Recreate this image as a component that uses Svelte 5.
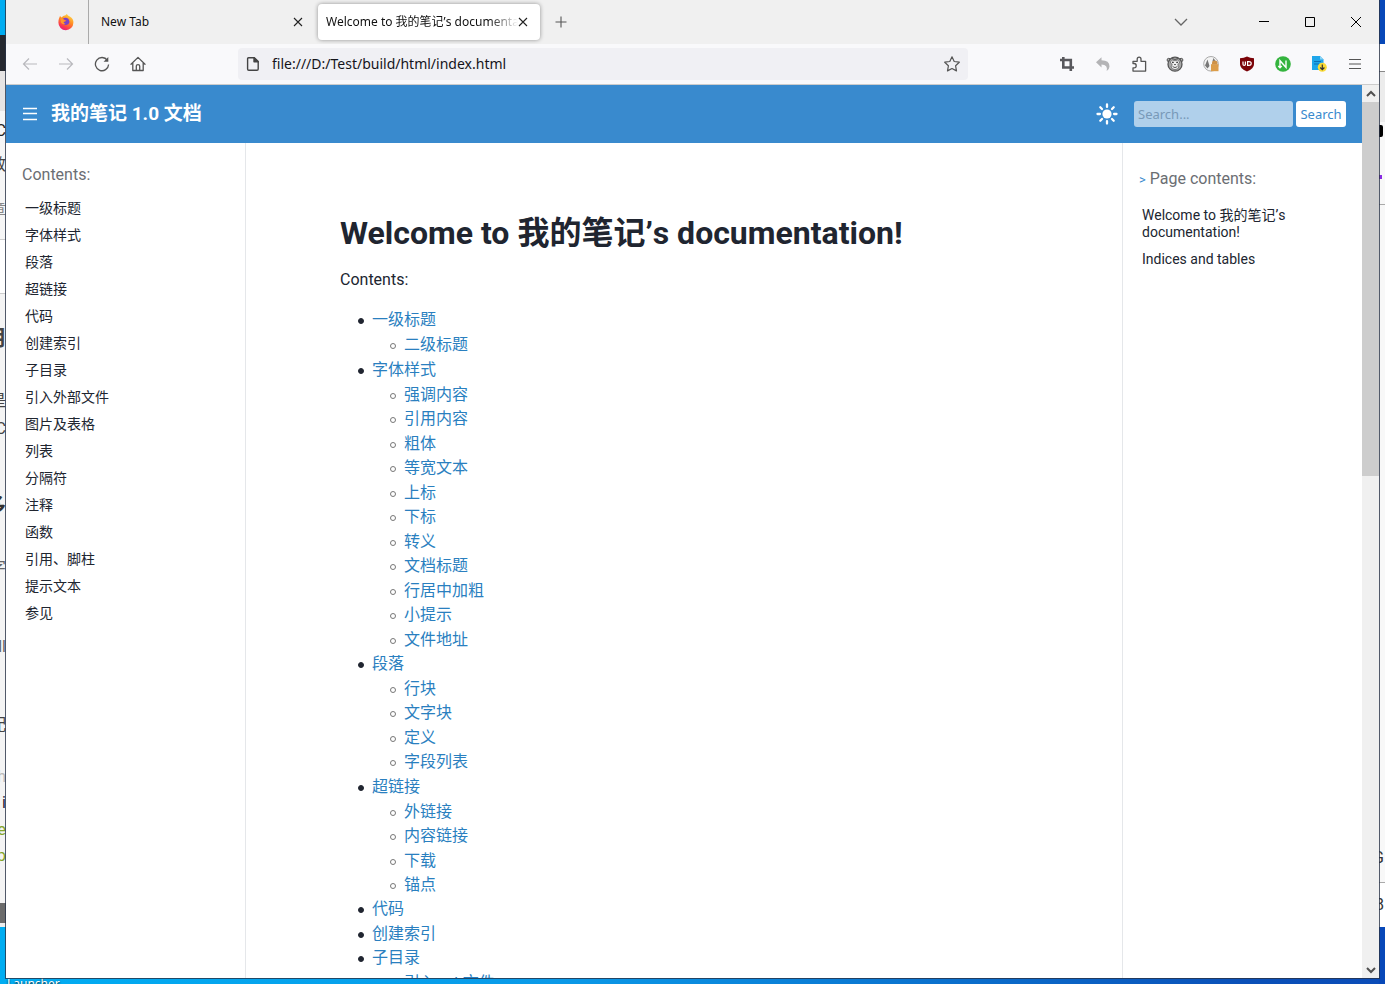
<script>
  const navItems = [
    '一级标题', '字体样式', '段落', '超链接', '代码', '创建索引', '子目录', '引入外部文件',
    '图片及表格', '列表', '分隔符', '注释', '函数', '引用、脚柱', '提示文本', '参见'
  ];

  const contents = [
    { title: '一级标题', children: ['二级标题'] },
    {
      title: '字体样式',
      children: [
        '强调内容', '引用内容', '粗体', '等宽文本', '上标', '下标',
        '转义', '文档标题', '行居中加粗', '小提示', '文件地址'
      ]
    },
    { title: '段落', children: ['行块', '文字块', '定义', '字段列表'] },
    { title: '超链接', children: ['外链接', '内容链接', '下载', '锚点'] },
    { title: '代码', children: [] },
    { title: '创建索引', children: [] },
    { title: '子目录', children: ['引入 rst 文件'] }
  ];

  // slivers of the windows lying behind the browser
  const leftBits = [
    { top: 121, text: 'C', color: '#222' },
    { top: 155, text: '效', color: '#444' },
    { top: 200, text: '章', color: '#888' },
    { top: 328, text: '用', color: '#444', bold: true },
    { top: 391, text: '是', color: '#444' },
    { top: 419, text: 'C', color: '#444' },
    { top: 496, text: '多', color: '#333', bold: true },
    { top: 558, text: '字', color: '#666' },
    { top: 637, text: 'll', color: '#666' },
    { top: 715, text: '配', color: '#444' },
    { top: 767, text: 'h', color: '#bbb' },
    { top: 793, text: 'i', color: '#223' },
    { top: 820, text: 'e', color: '#85a52b' },
    { top: 846, text: 'p', color: '#85a52b' }
  ];
  const rightBits = [
    { top: 848, text: 'G', color: '#333' },
    { top: 895, text: '8', color: '#333' }
  ];

  let url = 'file:///D:/Test/build/html/index.html';
  let query = '';
</script>

<div class="desktop">
  <div class="behind left">
    <div class="dark-bar"></div>
    <div class="grey-bar"></div>
    <div class="pale"></div>
    <div class="foot-bar"></div>
    {#each leftBits as b}
      <span class="bit" class:bold={b.bold} style="top: {b.top}px; color: {b.color}">{b.text}</span>
    {/each}
  </div>
  <div class="behind right">
    <div class="white-bar"></div>
    <div class="pale"></div>
    <i class="blob"></i>
    <i class="dot"></i>
    {#each rightBits as b}
      <span class="bit" style="top: {b.top}px; color: {b.color}">{b.text}</span>
    {/each}
  </div>
  <span class="shortcut">Launcher</span>

  <div class="window">
    <div class="tabs">
      <div class="pinned">
        <svg width="18" height="18" viewBox="0 0 18 18">
          <defs>
            <linearGradient id="fox" x1="0.8" y1="0" x2="0.3" y2="1">
              <stop offset="0" stop-color="#ffe14a" />
              <stop offset="0.45" stop-color="#ff8a24" />
              <stop offset="0.8" stop-color="#fb3a4e" />
              <stop offset="1" stop-color="#e01b84" />
            </linearGradient>
          </defs>
          <path d="M2 5.500 3 3l1.500 1.600Q6 2.600 8.500 2.200L9.800 1q1 1.700 3 2.600 4 2.400 3.600 6.200a7.500 7.500 0 0 1-15-.2Q1.400 7.200 2 5.500Z" fill="url(#fox)" />
          <path d="M6 5.500q3-1.500 5.500.5 1.800 2.600 0 5-3 2-5 0-1.500-2 .8-2.600 1.600.2 2.200-.6Q7.600 7.400 6 5.500Z" fill="#7b40c8" />
          <path d="M3.500 5.200q2 .2 3 2l2 .6q-1 1-2 1.300.3 1.600 2 1.600-3 1.500-4.600-1.200Z" fill="#ff9a2a" />
        </svg>
      </div>
      <div class="tab">
        <span class="label">New Tab</span>
        <button aria-label="Close New Tab">
          <svg width="10" height="10" viewBox="0 0 10 10"><path d="M1 1l8 8M9 1L1 9" stroke="#222" stroke-width="1.1" /></svg>
        </button>
      </div>
      <div class="tab active">
        <span class="label">Welcome to 我的笔记’s documentation! — 我的笔记</span>
        <button aria-label="Close tab">
          <svg width="10" height="10" viewBox="0 0 10 10"><path d="M1 1l8 8M9 1L1 9" stroke="#222" stroke-width="1.1" /></svg>
        </button>
      </div>
      <button class="new" aria-label="New tab">
        <svg width="12" height="12" viewBox="0 0 12 12"><path d="M6 .5v11M.5 6h11" stroke="#555" stroke-width="1.1" /></svg>
      </button>
      <div class="controls">
        <button class="list" aria-label="List all tabs">
          <svg width="14" height="14" viewBox="0 0 14 14" fill="none"><path d="M1 4l6 6 6-6" stroke="#666" stroke-width="1.3" /></svg>
        </button>
        <button aria-label="Minimize">
          <svg width="10" height="10" viewBox="0 0 10 10"><path d="M0 4.500h10" stroke="#000" /></svg>
        </button>
        <button aria-label="Maximize">
          <svg width="10" height="10" viewBox="0 0 10 10" fill="none"><path d="M.5 .5h9v9h-9z" stroke="#000" /></svg>
        </button>
        <button aria-label="Close window">
          <svg width="10" height="10" viewBox="0 0 10 10"><path d="M0 0l10 10M10 0L0 10" stroke="#000" /></svg>
        </button>
      </div>
    </div>

    <div class="toolbar">
      <button aria-label="Back">
        <svg width="16" height="16" viewBox="0 0 16 16" fill="none" stroke="#b9b9bd" stroke-width="1.2"><path d="M15 8H1.500M7 2.500L1.500 8 7 13.500" /></svg>
      </button>
      <button aria-label="Forward">
        <svg width="16" height="16" viewBox="0 0 16 16" fill="none" stroke="#b9b9bd" stroke-width="1.2"><path d="M1 8h13.500M9 2.500L14.500 8 9 13.500" /></svg>
      </button>
      <button aria-label="Reload">
        <svg width="16" height="16" viewBox="0 0 16 16" fill="none" stroke="#555" stroke-width="1.3"><path d="M13.400 4.300A6.600 6.600 0 1 0 14.600 8.500" /><path d="M14.300 1v4.700H9.600z" fill="#555" stroke="none" /></svg>
      </button>
      <button aria-label="Home">
        <svg width="16" height="16" viewBox="0 0 16 16" fill="none" stroke="#555" stroke-width="1.3" stroke-linejoin="round" stroke-linecap="round"><path d="M1 8.200L8 1.400l7 6.800M2.800 6.800v7.700h10.400V6.800M6.300 14.300V10q0-1.300 1.700-1.300T9.700 10v4.300" /></svg>
      </button>
      <div class="urlbar">
        <svg width="16" height="16" viewBox="0 0 16 16" fill="none" stroke="#444" stroke-width="1.4" stroke-linejoin="round"><path d="M3.600 1.700h5.700l3.900 3.900v7.500q0 1.200-1.200 1.200H3.800q-1.200 0-1.200-1.200V2.800q0-1.100 1-1.100Z" /><path d="M9 1.700v4.100h4.200z" fill="#444" /></svg>
        <input aria-label="Address" bind:value={url} />
        <button aria-label="Bookmark this page">
          <svg width="18" height="18" viewBox="0 0 18 18" fill="none" stroke="#555" stroke-width="1.2" stroke-linejoin="round"><path d="M9 1.800l2.200 4.700 5.100.7-3.700 3.600.9 5.100L9 13.500l-4.500 2.400.9-5.100L1.700 7.200l5.100-.7z" /></svg>
        </button>
      </div>
      <div class="extensions">
        <button aria-label="Screenshot">
          <svg width="16" height="16" viewBox="0 0 16 16" fill="none" stroke="#58585c" stroke-width="2.600"><path d="M1 4h10.800v7.500M4.300 1v10.500H15M11.800 11v4" /></svg>
        </button>
        <button aria-label="Undo close tab">
          <svg width="16" height="16" viewBox="0 0 16 16"><path d="M1 6.200L6.500 1.200v3.100q8 0 8 6.200 0 2.500-2.800 4.500 1.500-6.200-5.200-6.500v3z" fill="#b4b4b6" /></svg>
        </button>
        <button aria-label="Extensions">
          <svg width="16" height="16" viewBox="0 0 16 16" fill="none" stroke="#555" stroke-width="1.3" stroke-linejoin="round"><path d="M2 7.500V5.300h4.200V3.200q0-2 1.900-2t1.900 2v2.100h4.600v9.800H2v-3.200h1.200q2 0 2-2.200T3.200 7.500Z" /></svg>
        </button>
        <button aria-label="Tampermonkey">
          <svg width="18" height="18" viewBox="0 0 18 18" fill="none" stroke="#555"><circle cx="2.800" cy="5" r="1.700" fill="#bbb" /><circle cx="15.200" cy="5" r="1.700" fill="#bbb" /><circle cx="9" cy="9.200" r="7" fill="#a8a8a8" stroke-width="1.300" /><path d="M4.300 6.800q2-3 4.700-1 2.700-2 4.700 1-.4 2-2 2.800 2.300 2.400 0 4.200-2.700 1.500-5.400 0-2.300-1.800 0-4.200-1.600-.8-2-2.800Z" fill="#f2f2f2" stroke-width=".7" /><circle cx="6.900" cy="7.300" r=".9" fill="#333" stroke="none" /><circle cx="11.100" cy="7.300" r=".9" fill="#333" stroke="none" /><path d="M6.600 11.600q2.400 2 4.800 0M8 9.600h2M6 3.500l3 1 3-1" /></svg>
        </button>
        <button aria-label="Cookie editor">
          <svg width="18" height="18" viewBox="0 0 18 18"><circle cx="9" cy="8.800" r="7.300" fill="#f4f4f4" stroke="#aaa" /><path d="M5.500 4.500l2 6.500-2 2.500L3 10.500zM11.500 3l2 3-2 1.500-1-1.500z" fill="#777" /><path d="M9 9.200h7.500v7H9z" fill="#dc9d4a" /><path d="M10 9.400V7.500q0-2 2.700-2t2.700 2v1.900z" fill="#cf9246" /></svg>
        </button>
        <button aria-label="uBlock Origin">
          <svg width="16" height="16" viewBox="0 0 16 16"><path d="M8 .5q3 1.800 7 1.800v6q0 4.500-7 7.300-7-2.800-7-7.300v-6q4 0 7-1.800Z" fill="#7b0308" /><path d="M4 5.500v2.700q0 1.200 1.200 1.200t1.200-1.200V5.500m2.200.1v3.800h1.200q2.400 0 2.400-1.900T9.800 5.600z" fill="none" stroke="#fff" stroke-width="1.200" /></svg>
        </button>
        <button aria-label="Notes clipper">
          <svg width="16" height="16" viewBox="0 0 16 16"><circle cx="8" cy="8" r="7.800" fill="#34b43e" /><path d="M5 11.500V4.700l6 6.800V4.500M3.300 10l1.700 1.800 1.700-1.800" fill="none" stroke="#fff" stroke-width="1.400" /></svg>
        </button>
        <button aria-label="Save page">
          <svg width="16" height="16" viewBox="0 0 16 16"><path d="M1 0h8l3.500 3.500V14H1z" fill="#1fa6ea" /><path d="M9 0v3.500h3.500z" fill="#8ad4f6" /><path d="M3 5.500h7M3 8h5" stroke="#0d6fb5" /><circle cx="11.300" cy="11.300" r="4.500" fill="#fadb36" /><path d="M11.300 8.500v5M9.200 11.500l2.100 2.200 2.100-2.200" fill="none" stroke="#333" stroke-width="1.200" /></svg>
        </button>
        <button aria-label="Menu">
          <svg width="14" height="14" viewBox="0 0 14 14"><path d="M1 2.500h12M1 7h12M1 11.500h12" stroke="#555" stroke-width="1.200" /></svg>
        </button>
      </div>
    </div>

    <div class="viewport">
      <div class="page">
        <header>
          <button class="burger" aria-label="Toggle sidebar">
            <svg width="14" height="14" viewBox="0 0 14 14"><path d="M0 1.500h14M0 6.500h14M0 12.500h14" stroke="#fff" stroke-width="1.500" /></svg>
          </button>
          <a class="brand" href="#top">我的笔记 1.0 文档</a>
          <button class="theme" aria-label="Toggle theme">
            <svg width="22" height="22" viewBox="0 0 22 22"><circle cx="11" cy="11" r="4.600" fill="#fff" /><path d="M11 1.500v2.400M11 18.100v2.400M1.500 11h2.400M18.100 11h2.400M4.300 4.300L6 6M16 16l1.700 1.700M4.300 17.700L6 16M16 6l1.700-1.700" stroke="#fff" stroke-width="2.300" stroke-linecap="round" /></svg>
          </button>
          <form on:submit|preventDefault>
            <input type="text" placeholder="Search..." aria-label="Search" bind:value={query} />
            <button type="submit">Search</button>
          </form>
        </header>

        <div class="columns">
          <nav class="sidebar">
            <p class="caption">Contents:</p>
            <ul>
              {#each navItems as item}
                <li><a href="#{item}">{item}</a></li>
              {/each}
            </ul>
          </nav>

          <main id="top">
            <h1>Welcome to 我的笔记’s documentation!</h1>
            <p>Contents:</p>
            <ul>
              {#each contents as section}
                <li>
                  <a href="#{section.title}">{section.title}</a>
                  {#if section.children.length}
                    <ul>
                      {#each section.children as child}
                        <li><a href="#{child}">{child}</a></li>
                      {/each}
                    </ul>
                  {/if}
                </li>
              {/each}
            </ul>
          </main>

          <aside class="toc">
            <p class="caption"><span>&gt;</span> Page contents:</p>
            <ul>
              <li><a href="#top">Welcome to 我的笔记’s documentation!</a></li>
              <li><a href="#indices">Indices and tables</a></li>
            </ul>
          </aside>
        </div>
      </div>

      <div class="scrollbar">
        <button aria-label="Scroll up">
          <svg width="10" height="8" viewBox="0 0 10 8" fill="none"><path d="M1 6l4-4 4 4" stroke="#505050" stroke-width="2" /></svg>
        </button>
        <div class="track"><div class="thumb"></div></div>
        <button aria-label="Scroll down">
          <svg width="10" height="8" viewBox="0 0 10 8" fill="none"><path d="M1 2l4 4 4-4" stroke="#505050" stroke-width="2" /></svg>
        </button>
      </div>
    </div>
  </div>
</div>

<style>
  :global(body) {
    margin: 0;
    font-family: Roboto, "Noto Sans CJK SC", sans-serif;
    color: #202530;
  }

  .desktop {
    position: relative;
    display: flex;
    box-sizing: border-box;
    height: 100vh;
    padding: 0 6px 6px;
    overflow: hidden;
    background: linear-gradient(90deg, #00adf2, #0a9ae8 40%, #0a50b8 90%, #0b4cb8);
  }

  button {
    display: flex;
    align-items: center;
    justify-content: center;
    padding: 0;
    border: none;
    background: none;
    font: inherit;
  }

  ul {
    margin: 0;
    padding: 0;
    list-style: none;
  }

  a {
    color: inherit;
    text-decoration: none;
  }

  /* windows behind */
  .behind {
    position: absolute;
    top: 0;
    bottom: 0;
    width: 6px;
    overflow: hidden;
    display: flex;
    flex-direction: column;
  }

  .left {
    left: 0;
    padding-top: 35px;
    box-sizing: border-box;
  }

  .right {
    right: 0;
    padding-top: 44px;
    box-sizing: border-box;
    background: #0848b8;
  }

  .dark-bar {
    height: 36px;
    background: #25282f;
  }

  .grey-bar {
    height: 40px;
    background: #e6e4e4;
  }

  .left .pale {
    height: 792px;
    background: linear-gradient(#f6f6f6 128px, #ccc 128px, #ccc 129px, #fff 129px, #fff 182px, #ccc 182px, #ccc 183px, #f4f4f4 183px);
  }

  .foot-bar {
    height: 20px;
    background: #6b6b6b;
    border-bottom: 4px solid #eee;
  }

  .white-bar {
    height: 27px;
    background: #fff;
    border-bottom: 1px solid #888;
  }

  .right .pale {
    height: 855px;
    background: linear-gradient(#ececec 50px, #f8f8f8 50px, #f8f8f8 132px, #aaa 132px, #aaa 133px, #f8f8f8 133px, #f8f8f8 810px, #aaa 810px, #aaa 811px, #fff 811px);
  }

  .bit {
    position: absolute;
    right: 0;
    font-size: 16px;
    line-height: 20px;
  }

  .right .bit {
    right: 1px;
  }

  .bold {
    font-size: 22px;
    font-weight: bold;
  }

  .blob {
    position: absolute;
    top: 125px;
    left: 0;
    width: 4px;
    height: 12px;
    border-radius: 0 2px 2px 0;
    background: #000;
  }

  .dot {
    position: absolute;
    top: 175px;
    left: 0;
    width: 3px;
    height: 4px;
    background: #8a2be2;
  }

  .shortcut {
    position: absolute;
    left: 7px;
    top: 976px;
    color: #fff;
    font: 12px/15px "Noto Sans", sans-serif;
    text-shadow: 0 1px 2px #000;
  }

  .window {
    position: relative;
    display: flex;
    flex: 1;
    flex-direction: column;
    min-width: 0;
    background: #fff;
    box-shadow: 0 0 0 1px rgba(40, 50, 70, 0.8);
  }

  /* tab strip */
  .tabs {
    display: flex;
    align-items: center;
    height: 44px;
    background: #f0f0f0;
    font: 12px/20px "Noto Sans", "Noto Sans CJK SC", sans-serif;
    color: #111;
  }

  .pinned {
    display: flex;
    align-items: center;
    justify-content: flex-end;
    box-sizing: border-box;
    width: 83px;
    height: 100%;
    padding-right: 13px;
    border-right: 1px solid #aaa;
  }

  .tab {
    display: flex;
    align-items: center;
    box-sizing: border-box;
    width: 222px;
    height: 36px;
    margin-left: 4px;
    padding: 0 12px 0 8px;
    border-radius: 4px;
  }

  .tab .label {
    flex: 1;
    overflow: hidden;
    white-space: nowrap;
  }

  .active {
    background: #fff;
    box-shadow: 0 0 4px rgba(0, 0, 0, 0.4);
  }

  .tab.active {
    margin-left: 3px;
  }

  .active .label {
    mask-image: linear-gradient(90deg, #000 85%, transparent);
  }

  .tab button {
    width: 10px;
  }

  .new {
    margin-left: 15px;
  }

  .controls {
    display: flex;
    align-items: center;
    margin-left: auto;
  }

  .controls button {
    width: 46px;
    height: 44px;
  }

  .controls .list {
    margin-right: 37px;
  }

  /* toolbar */
  .toolbar {
    display: flex;
    align-items: center;
    height: 40px;
    padding: 0 6px;
    background: #f9f9fb;
    border-bottom: 1px solid #ccc;
  }

  .toolbar button {
    width: 36px;
    height: 32px;
  }

  .urlbar {
    display: flex;
    align-items: center;
    flex: 1;
    box-sizing: border-box;
    height: 32px;
    margin-left: 82px;
    padding-left: 7px;
    background: #f0f0f4;
    border-radius: 4px;
  }

  .urlbar input {
    flex: 1;
    min-width: 0;
    padding: 0 0 0 11px;
    border: none;
    background: none;
    outline: none;
    color: #15141a;
    font: 14px/20px "Noto Sans", sans-serif;
  }

  .toolbar .urlbar button {
    width: 32px;
  }

  .extensions {
    display: flex;
    margin-left: 81px;
  }

  /* page */
  .viewport {
    display: flex;
    flex: 1;
    min-height: 0;
  }

  .page {
    display: flex;
    flex: 1;
    flex-direction: column;
    min-width: 0;
    overflow: hidden;
  }

  header {
    display: flex;
    flex: none;
    align-items: center;
    height: 58px;
    padding: 0 16px 0 17px;
    background: #398ace;
    color: #fff;
  }

  .brand {
    margin-left: 14px;
    font-size: 19px;
    font-weight: bold;
    line-height: 24px;
  }

  .theme {
    margin-left: auto;
  }

  form {
    display: flex;
    gap: 3px;
    margin-left: 16px;
    font: 13px/20px "Noto Sans", sans-serif;
  }

  form input {
    box-sizing: border-box;
    width: 159px;
    height: 26px;
    padding: 0 4px;
    border: none;
    border-radius: 3px;
    background: #b0d0eb;
    font: inherit;
  }

  form input::placeholder {
    color: #7899b8;
    opacity: 1;
  }

  form button {
    width: 50px;
    height: 26px;
    border-radius: 3px;
    background: #fff;
    color: #398ace;
  }

  .columns {
    display: flex;
    flex: 1;
    min-height: 0;
  }

  .sidebar,
  .toc {
    flex: none;
    box-sizing: border-box;
    width: 240px;
    padding: 21px 16px;
    font-size: 14px;
    line-height: 17px;
  }

  .sidebar {
    border-right: 1px solid #e5e7ea;
  }

  .toc {
    padding-top: 25px;
    border-left: 1px solid #e5e7ea;
  }

  .caption {
    margin: 0 0 9px;
    color: #6b6e73;
    font-size: 16px;
    line-height: 22px;
  }

  .toc .caption {
    margin-bottom: 11px;
  }

  .caption span {
    color: #398ace;
    font-size: 13px;
  }

  .sidebar li,
  .toc li {
    padding: 5px 3px;
  }

  main {
    flex: 1;
    min-width: 0;
    padding: 68px 94px 0;
    font-size: 16px;
    line-height: 24px;
  }

  h1 {
    margin: 0;
    font-size: 32px;
    line-height: 44px;
  }

  main p {
    margin: 13px 0 16px;
  }

  main ul {
    padding-left: 32px;
  }

  main li::before {
    content: "";
    display: inline-block;
    box-sizing: border-box;
    width: 6px;
    height: 6px;
    margin: 0 8px 0 -14px;
    border: 1px solid #202530;
    border-radius: 50%;
    background: #202530;
    vertical-align: middle;
  }

  main ul ul li::before {
    border-color: #777;
    background: none;
  }

  main li:nth-child(even),
  main ul ul li:nth-child(odd) {
    line-height: 25px;
  }

  main ul ul li:nth-child(even) {
    line-height: 24px;
  }

  main li a {
    color: #2a7fbf;
  }

  /* scrollbar */
  .scrollbar {
    display: flex;
    flex: none;
    flex-direction: column;
    width: 17px;
    background: #f0f0f0;
  }

  .scrollbar button {
    width: 17px;
    height: 17px;
  }

  .track {
    flex: 1;
  }

  .thumb {
    height: 43.5%;
    background: #cdcdcd;
  }
</style>
